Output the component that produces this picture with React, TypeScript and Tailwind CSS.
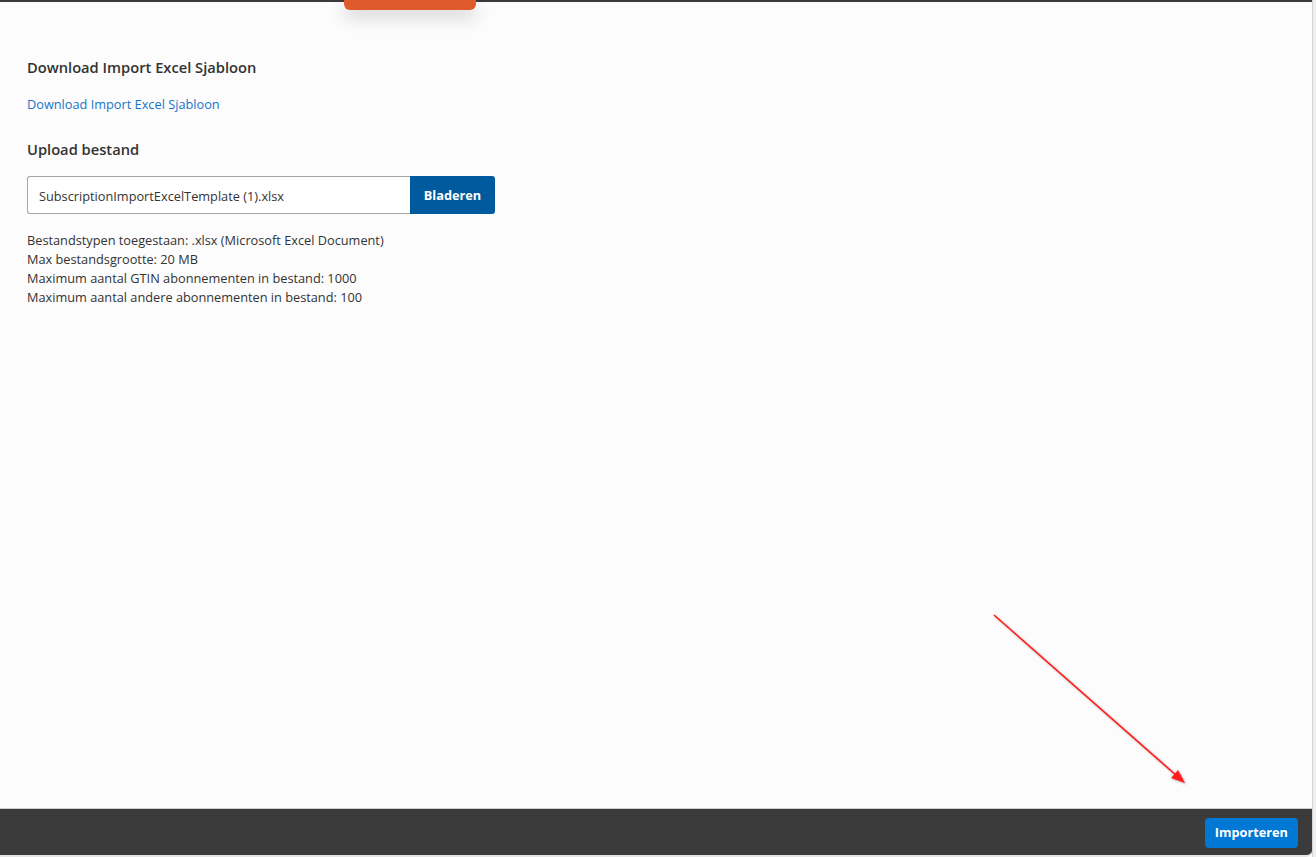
import React from 'react';

const font = { fontFamily: '"Open Sans", "Noto Sans", Arial, sans-serif' };

function Arrow() {
    return (
        <svg
            className="absolute left-0 top-0 pointer-events-none"
            width="1316"
            height="857"
            viewBox="0 0 1316 857"
        >
            <defs>
                <filter id="sh" x="-50%" y="-50%" width="200%" height="200%">
                    <feDropShadow dx="1" dy="1" stdDeviation="1" floodColor="#000" floodOpacity="0.35" />
                </filter>
            </defs>
            <g filter="url(#sh)">
                <line x1="994" y1="615" x2="1177" y2="776" stroke="#ff1a1a" strokeWidth="1.6" />
                <polygon points="1185,783 1171,778 1178,770" fill="#ff1a1a" />
            </g>
        </svg>
    );
}

export default function App() {
    const rules = [
        'Bestandstypen toegestaan: .xlsx (Microsoft Excel Document)',
        'Max bestandsgrootte: 20 MB',
        'Maximum aantal GTIN abonnementen in bestand: 1000',
        'Maximum aantal andere abonnementen in bestand: 100',
    ];

    return (
        <div className="w-[1316px] h-[857px] bg-[#f0f0f0] overflow-hidden" style={font}>
            <div className="relative w-[1313px] h-[857px] flex flex-col bg-[#fcfcfc] border-r border-[#d6d6d6]">
                {/* top bar */}
                <div className="h-[2px] bg-[#3a3a3a] shrink-0" />

                {/* orange tab */}
                <div className="absolute left-[344px] top-0 w-[132px] h-[10px] bg-[#e05b2c] rounded-b-[6px] shadow-[0_6px_18px_rgba(0,0,0,0.22)]" />

                {/* content */}
                <div className="flex-1 px-[27px] pt-[54px] text-[#333]">
                    <h2 className="text-[14.7px] font-semibold leading-[22px]">Download Import Excel Sjabloon</h2>
                    <a className="block mt-[17px] text-[12.75px] leading-[18px] text-[#1a73c9]" href="#">
                        Download Import Excel Sjabloon
                    </a>

                    <h2 className="mt-[25px] text-[14.7px] font-semibold leading-[22px]">Upload bestand</h2>

                    <div className="mt-[16px] flex w-[468px] h-[38px]">
                        <div className="flex-1 flex items-center pl-[11px] pt-[3px] border border-[#a6a6a6] border-r-0 rounded-l-[3px] bg-white text-[12.75px] text-[#333]">
                            SubscriptionImportExcelTemplate (1).xlsx
                        </div>
                        <button className="w-[85px] pt-[1px] bg-[#005a9e] text-white text-[12.75px] font-bold rounded-r-[3px]">
                            Bladeren
                        </button>
                    </div>

                    <div className="mt-[17px] text-[12.75px] leading-[19px] text-[#333]">
                        {rules.map((r) => (
                            <div key={r}>{r}</div>
                        ))}
                    </div>
                </div>

                {/* footer */}
                <div className="h-[49px] shrink-0 border-t border-[#d0d0d0] bg-[#3b3b3b] flex items-center justify-end pr-[14px] rounded-br-[6px] border-b-2 border-b-[#e4e4e4]">
                    <button className="h-[30px] mt-[2px] px-[10px] bg-[#0078d4] text-white text-[12.75px] font-bold rounded-[4px]">
                        Importeren
                    </button>
                </div>

                <Arrow />
            </div>
        </div>
    );
}
